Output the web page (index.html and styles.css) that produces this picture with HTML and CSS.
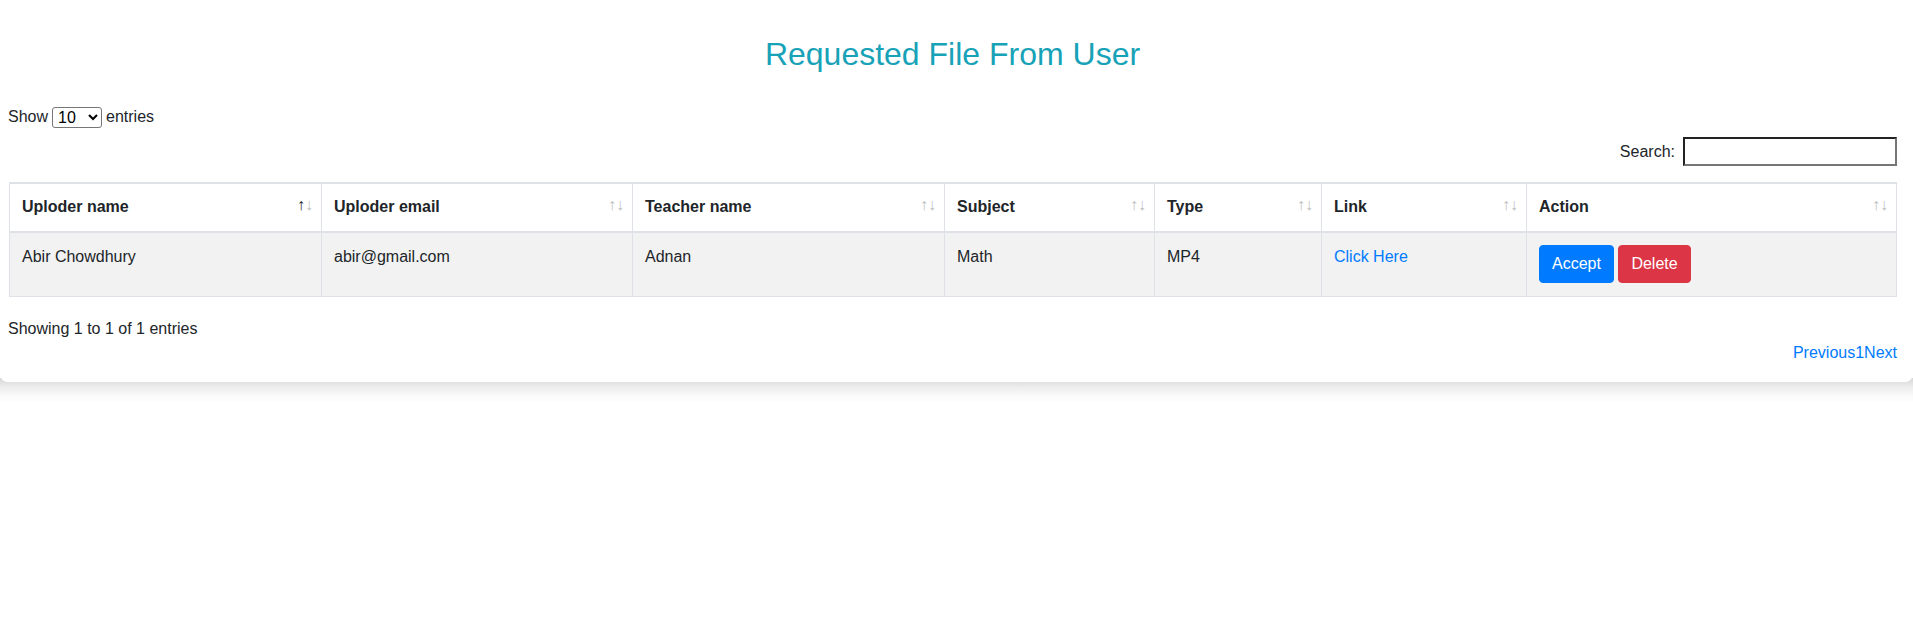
FILE: index.html
```html
<!DOCTYPE html>
<html>
<head>
<meta charset="utf-8">
<link rel="stylesheet" href="styles.css">
</head>
<body>
<div class="card">
  <h2 class="title">Requested File From User</h2>
  <div class="length">Show <select class="len-select"><option>10</option><option>25</option></select> entries</div>
  <div class="filter"><label>Search:</label><input class="search" type="search"></div>
  <table class="data">
    <colgroup>
      <col style="width:312px"><col style="width:311px"><col style="width:312px"><col style="width:210px"><col style="width:167px"><col style="width:205px"><col>
    </colgroup>
    <thead>
      <tr>
        <th class="sort asc">Uploder name</th>
        <th class="sort">Uploder email</th>
        <th class="sort">Teacher name</th>
        <th class="sort">Subject</th>
        <th class="sort">Type</th>
        <th class="sort">Link</th>
        <th class="sort">Action</th>
      </tr>
    </thead>
    <tbody>
      <tr>
        <td>Abir Chowdhury</td>
        <td>abir@gmail.com</td>
        <td>Adnan</td>
        <td>Math</td>
        <td>MP4</td>
        <td><a class="link" href="#">Click Here</a></td>
        <td><button class="btn btn-blue">Accept</button> <button class="btn btn-red">Delete</button></td>
      </tr>
    </tbody>
  </table>
  <div class="info">Showing 1 to 1 of 1 entries</div>
  <div class="paginate"><a href="#">Previous</a><a href="#">1</a><a href="#">Next</a></div>
</div>
<div class="shade"></div>
</body>
</html>
```
FILE: styles.css
```css
html, body {
  margin: 0;
  padding: 0;
  background: #fff;
}
body {
  font-family: "Liberation Sans", Arial, sans-serif;
  font-size: 16px;
  line-height: 24px;
  color: #212529;
  min-height: 100vh;
}
.card {
  background: #fff;
  padding: 35px 16px 17px 8px;
  border-radius: 0 0 8px 8px;
  position: relative;
  z-index: 1;
}
.shade {
  height: 26px;
  margin-top: -4px;
  background: linear-gradient(to bottom, rgba(0, 0, 0, 0.16), rgba(0, 0, 0, 0.07) 35%, rgba(0, 0, 0, 0.02) 70%, rgba(0, 0, 0, 0));
}
.title {
  margin: 0;
  font-size: 32px;
  line-height: 38px;
  font-weight: 500;
  color: #17a2b8;
  text-align: center;
}
.length {
  margin-top: 32px;
  height: 24px;
  display: flex;
  align-items: center;
  gap: 4px;
}
.len-select {
  font-family: "Liberation Sans", Arial, sans-serif;
  font-size: 16px;
  width: 50px;
  height: 21px;
  padding: 0 0 0 1px;
  border: 1px solid #767676;
  border-radius: 3px;
  background: #fff;
  color: #000;
}
.filter {
  margin-top: 8px;
  display: flex;
  justify-content: flex-end;
  align-items: center;
  gap: 8px;
}
.filter label {
  font-size: 16px;
}
.search {
  box-sizing: border-box;
  width: 214px;
  height: 29px;
  border: 2px solid #222;
  border-right-color: #767676;
  border-bottom-color: #767676;
  background: #fff;
  font-size: 16px;
}
.data {
  margin-top: 16px;
  margin-left: 1px;
  width: calc(100% - 1px);
  table-layout: fixed;
  border-collapse: collapse;
}
.data th, .data td {
  border: 1px solid #dee2e6;
  padding: 12px;
  text-align: left;
}
.data th {
  font-weight: bold;
  vertical-align: bottom;
  border-top-width: 2px;
  border-bottom-width: 2px;
  padding-top: 11px;
  padding-right: 30px;
  position: relative;
  line-height: 24px;
}
.data td {
  vertical-align: top;
  background: #f2f2f2;
  padding-bottom: 13px;
}
.sort::before, .sort::after {
  position: absolute;
  bottom: 0.9em;
  display: block;
  opacity: 0.3;
  font-weight: normal;
  line-height: 24px;
}
.sort::before {
  right: 1em;
  content: "\2191";
}
.sort::after {
  right: 0.5em;
  content: "\2193";
}
.sort.asc::before {
  opacity: 1;
}
.link {
  color: #007bff;
  text-decoration: none;
}
.btn {
  font-family: "Liberation Sans", Arial, sans-serif;
  font-size: 16px;
  line-height: 24px;
  padding: 6px 12px;
  border: 1px solid transparent;
  border-radius: 4px;
  color: #fff;
  cursor: pointer;
}
.btn-blue {
  background: #007bff;
  border-color: #007bff;
}
.btn-red {
  background: #dc3545;
  border-color: #dc3545;
}
.info {
  margin-top: 20px;
}
.paginate {
  margin-top: 0;
  text-align: right;
}
.paginate a {
  color: #007bff;
  text-decoration: none;
}
```
